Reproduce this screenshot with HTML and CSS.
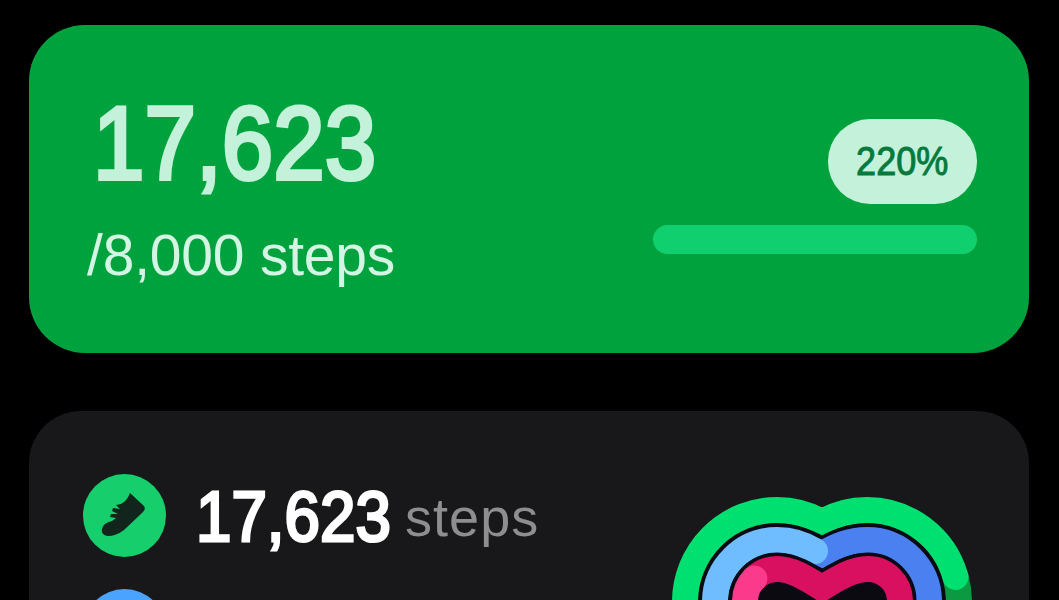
FILE: index.html
```html
<!DOCTYPE html>
<html lang="en">
  <head>
    <meta charset="UTF-8" />
    <title>Steps</title>
    <link rel="stylesheet" href="styles.css">
  </head>
  <body>
    <section class="goal-card">
      <div class="goal-text">
        <div class="goal-count">17,623</div>
        <div class="goal-target">/8,000 steps</div>
      </div>
      <div class="goal-progress">
        <div class="goal-pill"><span class="goal-pill-text">220%</span></div>
        <div class="goal-bar"></div>
      </div>
    </section>

    <section class="stats-card">
      <div class="stats-list">
        <div class="stat-row">
          <div class="stat-icon stat-icon-green">
            <svg viewBox="0 0 82 82" width="82" height="82">
              <path class="shoe" d="M47 19 L61 32 Q63 35 60 38 L41 56 Q33 62 25 62 Q18 61 19 55 Q20 49 29 47 L33 44 L27 43 L28 40 L35 40 L29 37 L30 34 L37 35 L33 31 L38 30 Q44 27 47 19 Z" />
            </svg>
          </div>
          <span class="stat-value">17,623</span>
          <span class="stat-unit">steps</span>
        </div>
        <div class="stat-row">
          <div class="stat-icon stat-icon-blue"></div>
        </div>
      </div>
      <svg class="rings" viewBox="672 497 300 200" width="300" height="200">
        <path class="ring ring-green-end" d="M955.5 577 A92 92 0 0 1 959 602 L959 690" />
        <path class="ring ring-green" d="M685 690 L685 602 A92 92 0 0 1 777 510 A92 92 0 0 1 822 521.8 A92 92 0 0 1 867 510 A92 92 0 0 1 955.5 577" />

        <path class="ring-edge" d="M715 690 L715 602 A62 62 0 0 1 777 540 C795 540 808 546 822 554 C836 546 849 540 867 540 A62 62 0 0 1 929 602 L929 690" />
        <path class="ring ring-blue-dark" d="M808 548 L822 554 C836 546 849 540 867 540 A62 62 0 0 1 929 602 L929 690" />
        <path class="ring ring-blue" d="M715 690 L715 602 A62 62 0 0 1 777 540 C791 540 804 544 815 551" />

        <path class="ring-edge ring-hole" d="M745 690 L745 601 A32 32 0 0 1 777 569 C792 569 806 578 822 588 C838 578 853 569 868 569 A32 32 0 0 1 900 601 L900 690" />
        <path class="ring ring-pink" d="M754 579 A32 32 0 0 1 777 569 C792 569 806 578 822 588 C838 578 853 569 868 569 A32 32 0 0 1 900 601 L900 690" />
        <path class="ring ring-pink-light" d="M745 690 L745 601 A32 32 0 0 1 754.4 578.4" />
      </svg>
    </section>
  </body>
</html>
```

FILE: styles.css
```css
* {
  box-sizing: border-box;
}

html,
body {
  background-color: #000;
  height: 100%;
  margin: 0;
  overflow: hidden;
}

body {
  display: flex;
  flex-direction: column;
  font-family: "Liberation Sans", sans-serif;
  gap: 58px;
  padding: 25px 30px 0 29px;
}

.goal-card {
  align-items: flex-start;
  background-color: #00a23d;
  border-radius: 56px;
  display: flex;
  flex-shrink: 0;
  height: 328px;
  justify-content: space-between;
  padding: 0 52px 0 58px;
}

.goal-text {
  color: #d5f5e4;
}

.goal-count {
  -webkit-text-stroke: 4px #c3f1da;
  color: #c3f1da;
  font-size: 104px;
  line-height: 112px;
  margin-left: 6px;
  margin-top: 62px;
  transform: scaleX(0.89);
  transform-origin: left center;
}

.goal-target {
  font-size: 57px;
  letter-spacing: -0.2px;
  line-height: 64px;
  margin-top: 24px;
}

.goal-progress {
  align-items: flex-end;
  display: flex;
  flex-direction: column;
  gap: 21px;
  margin-top: 94px;
  width: 324px;
}

.goal-pill {
  align-items: center;
  background-color: #c3f1da;
  border-radius: 42px;
  color: #067a3c;
  display: flex;
  font-size: 40px;
  height: 85px;
  justify-content: center;
  width: 149px;
}

.goal-pill-text {
  -webkit-text-stroke: 1px #067a3c;
  transform: scaleX(0.9);
}

.goal-bar {
  background-color: #10cf6e;
  border-radius: 15px;
  height: 29px;
  width: 100%;
}

.stats-card {
  align-items: flex-start;
  background-color: #18181a;
  border-radius: 52px;
  display: flex;
  flex-shrink: 0;
  height: 420px;
  justify-content: space-between;
  padding: 63px 57px 0 54px;
}

.stats-list {
  display: flex;
  flex-direction: column;
  gap: 32px;
}

.stat-row {
  align-items: center;
  display: flex;
  height: 83px;
}

.stat-icon {
  border-radius: 50%;
  flex-shrink: 0;
  height: 83px;
  width: 83px;
}

.stat-icon svg {
  display: block;
}

.stat-icon-green {
  background-color: #16cf6c;
}

.stat-icon-blue {
  background-color: #4aa3ff;
}

.shoe {
  fill: #12251c;
}

.stat-value {
  -webkit-text-stroke: 3px #fff;
  color: #fff;
  font-size: 70px;
  line-height: 83px;
  margin-left: 30px;
  margin-right: -19px;
  margin-top: 4px;
  transform: scaleX(0.91);
  transform-origin: left center;
}

.stat-unit {
  color: #8e8e90;
  font-size: 54px;
  letter-spacing: 1px;
  line-height: 83px;
  margin-left: 14px;
  margin-top: 4px;
}

.rings {
  display: block;
  flex-shrink: 0;
  margin-top: 23px;
}

.ring,
.ring-edge {
  fill: none;
}

.ring {
  stroke-linecap: round;
  stroke-width: 26;
}

.ring-edge {
  stroke: #0a0a14;
  stroke-width: 33;
}

.ring-hole {
  fill: #0a0a10;
}

.ring-green {
  stroke: #00e070;
}

.ring-green-end {
  stroke: #0b9a42;
}

.ring-blue {
  stroke: #6fbcff;
}

.ring-blue-dark {
  stroke: #4a80f0;
}

.ring-pink {
  stroke: #d90f60;
}

.ring-pink-light {
  stroke: #fb3a8c;
}
```
